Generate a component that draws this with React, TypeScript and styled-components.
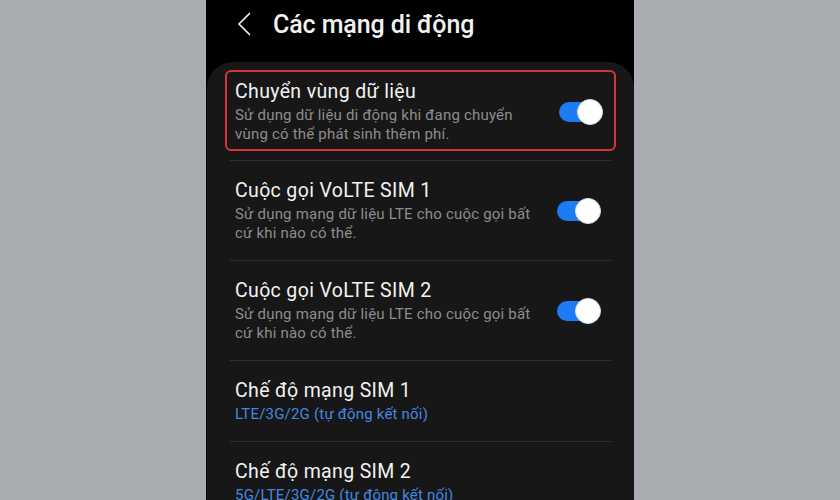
import React from 'react';
import styled, { createGlobalStyle } from 'styled-components';

const GlobalStyle = createGlobalStyle`
	html, body {
		margin: 0;
		padding: 0;
	}
	body {
		font-family: Roboto, "Noto Sans", "Liberation Sans", sans-serif;
		background: #a9adb1;
	}
`;

type settingType = {
	title: string;
	description: string;
	toggle?: boolean;
	accent?: boolean;
	highlighted?: boolean;
};

const settings: Array<settingType> = [
	{
		title: 'Chuyển vùng dữ liệu',
		description: 'Sử dụng dữ liệu di động khi đang chuyển vùng có thể phát sinh thêm phí.',
		toggle: true,
		highlighted: true,
	},
	{
		title: 'Cuộc gọi VoLTE SIM 1',
		description: 'Sử dụng mạng dữ liệu LTE cho cuộc gọi bất cứ khi nào có thể.',
		toggle: true,
	},
	{
		title: 'Cuộc gọi VoLTE SIM 2',
		description: 'Sử dụng mạng dữ liệu LTE cho cuộc gọi bất cứ khi nào có thể.',
		toggle: true,
	},
	{
		title: 'Chế độ mạng SIM 1',
		description: 'LTE/3G/2G (tự động kết nối)',
		accent: true,
	},
	{
		title: 'Chế độ mạng SIM 2',
		description: '5G/LTE/3G/2G (tự động kết nối)',
		accent: true,
	},
];

const BackIcon = () => (
	<svg width="14" height="24" viewBox="0 0 14 24" fill="none">
		<path d="M12.5 1.5 L2 12 L12.5 22.5" stroke="#f2f2f2" strokeWidth="1.7" strokeLinecap="round" strokeLinejoin="round" />
	</svg>
);

const SettingRow = (props: { item: settingType }) => {
	const { item } = props;
	return (
		<StyledRow highlighted={item.highlighted}>
			<StyledText>
				<StyledTitle>{item.title}</StyledTitle>
				<StyledDescription accent={item.accent}>{item.description}</StyledDescription>
			</StyledText>
			{item.toggle && (
				<StyledSwitch>
					<StyledKnob />
				</StyledSwitch>
			)}
		</StyledRow>
	);
};

export default function App() {
	return (
		<>
			<GlobalStyle />
			<StyledPage>
				<StyledPhone>
					<StyledHeader>
						<StyledBack>
							<BackIcon />
						</StyledBack>
						<StyledHeading>Các mạng di động</StyledHeading>
					</StyledHeader>
					<StyledCard>
						{settings.map((item, index) => (
							<React.Fragment key={index}>
								{index > 0 && <StyledDivider />}
								<SettingRow item={item} />
							</React.Fragment>
						))}
					</StyledCard>
				</StyledPhone>
			</StyledPage>
		</>
	);
}

const StyledPage = styled.div`
	width: 840px;
	height: 500px;
	display: flex;
	justify-content: center;
	overflow: hidden;
	background: #a9adb1;
`;

const StyledPhone = styled.div`
	width: 428px;
	height: 500px;
	background: #000000;
	display: flex;
	flex-direction: column;
	padding-left: 1px;
	box-sizing: border-box;
`;

const StyledHeader = styled.div`
	height: 49px;
	display: flex;
	align-items: center;
	flex-shrink: 0;
`;

const StyledBack = styled.div`
	width: 14px;
	height: 24px;
	margin-left: 30px;
	margin-right: 22px;
	display: flex;
	margin-top: -1px;
`;

const StyledHeading = styled.h1`
	margin: 0;
	font-size: 25px;
	line-height: 30px;
	font-weight: 500;
	color: #f2f2f2;
	letter-spacing: -0.1px;
`;

const StyledCard = styled.div`
	margin-top: 13px;
	flex: 1;
	background: #171717;
	border-radius: 26px 26px 0 0;
	padding: 8px 18px 0 18px;
	overflow: hidden;
`;

const StyledRow = styled.div<{ highlighted?: boolean }>`
	display: flex;
	align-items: center;
	box-sizing: border-box;
	border: 2px solid ${(p) => (p.highlighted ? '#d8343b' : 'transparent')};
	border-radius: 6px;
	padding: ${(p) => (p.highlighted ? '8px 11px 5px 8px' : '16px 13px 15px 8px')};
	margin-bottom: ${(p) => (p.highlighted ? '9px' : '0')};
`;

const StyledText = styled.div`
	flex: 1;
	display: flex;
	flex-direction: column;
	gap: 2px;
	padding-right: 16px;
`;

const StyledTitle = styled.div`
	font-size: 19.5px;
	line-height: 24px;
	letter-spacing: 0.35px;
	color: #f2f2f2;
`;

const StyledDescription = styled.div<{ accent?: boolean }>`
	font-size: 15px;
	line-height: 19px;
	letter-spacing: 0.2px;
	color: ${(p) => (p.accent ? '#4588e0' : '#8d8d8d')};
	max-width: 305px;
`;

const StyledDivider = styled.div`
	height: 1px;
	margin: 0 5px;
	background: #2f2f2f;
`;

const StyledSwitch = styled.div`
	position: relative;
	width: 42px;
	height: 20px;
	border-radius: 10px;
	background: #1b7cf4;
	flex-shrink: 0;
	margin-right: 2px;
`;

const StyledKnob = styled.div`
	position: absolute;
	right: -2px;
	top: -3px;
	width: 26px;
	height: 26px;
	border-radius: 50%;
	background: #ffffff;
	box-sizing: border-box;
	border: 1px solid #cfe0f7;
`;
